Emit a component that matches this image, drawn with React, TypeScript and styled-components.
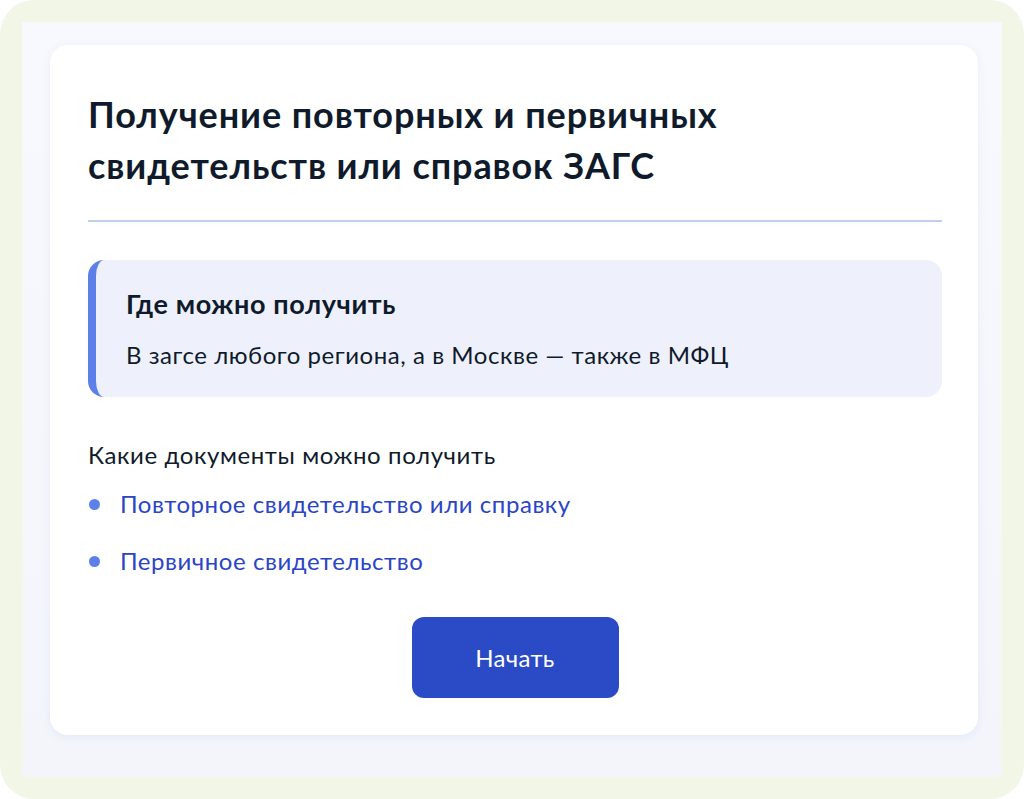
import React from "react";
import styled, { createGlobalStyle } from "styled-components";

const GlobalStyle = createGlobalStyle`
  html, body {
    margin: 0;
    padding: 0;
    background: #ffffff;
  }
  body {
    font-family: Lato, "Noto Sans", sans-serif;
    -webkit-font-smoothing: antialiased;
  }
`;

const docs = ["Повторное свидетельство или справку", "Первичное свидетельство"];

const App: React.FC = () => (
  <>
    <GlobalStyle />
    <Frame>
      <Canvas>
        <Card>
          <Title>
            Получение повторных и первичных
            <br />
            свидетельств или справок ЗАГС
          </Title>
          <Divider />
          <InfoBox>
            <InfoTitle>Где можно получить</InfoTitle>
            <InfoText>В загсе любого региона, а в Москве — также в МФЦ</InfoText>
          </InfoBox>
          <ListLabel>Какие документы можно получить</ListLabel>
          <DocList>
            {docs.map((d) => (
              <DocItem key={d}>
                <Dot />
                <DocLink>{d}</DocLink>
              </DocItem>
            ))}
          </DocList>
          <ButtonRow>
            <StartButton>Начать</StartButton>
          </ButtonRow>
        </Card>
      </Canvas>
    </Frame>
  </>
);

export default App;

// ------------------ Styled Components ------------------

const Frame = styled.div`
  width: 1024px;
  height: 799px;
  box-sizing: border-box;
  padding: 22px;
  background: #f2f6e7;
  border-radius: 34px;
`;

const Canvas = styled.div`
  height: 100%;
  box-sizing: border-box;
  padding: 23px 24px 0 28px;
  background: linear-gradient(180deg, #f8f9fe 0%, #f3f5fb 100%);
`;

const Card = styled.div`
  height: 690px;
  box-sizing: border-box;
  padding: 44px 36px 0 38px;
  background: #ffffff;
  border-radius: 18px;
  box-shadow: 0 2px 10px rgba(120, 130, 200, 0.1);
`;

const Title = styled.h1`
  margin: 0;
  font-size: 36px;
  line-height: 51px;
  font-weight: 700;
  color: #0f1a2b;
  letter-spacing: 0.9px;
`;

const Divider = styled.div`
  height: 2px;
  margin-top: 29px;
  background: #c3cff0;
`;

const InfoBox = styled.div`
  margin-top: 38px;
  height: 137px;
  box-sizing: border-box;
  padding: 28px 32px 0 30px;
  background: #eef1fb;
  border-radius: 16px;
  border-left: 8px solid #5c80e8;
`;

const InfoTitle = styled.div`
  font-size: 27px;
  line-height: 32px;
  font-weight: 700;
  color: #0f1a2b;
  letter-spacing: 0.6px;
`;

const InfoText = styled.div`
  margin-top: 21px;
  font-size: 24px;
  line-height: 28px;
  color: #0f1a2b;
  letter-spacing: 0.55px;
`;

const ListLabel = styled.div`
  margin-top: 44px;
  font-size: 24px;
  line-height: 28px;
  color: #0f1a2b;
  letter-spacing: 0.6px;
`;

const DocList = styled.ul`
  list-style: none;
  margin: 21px 0 0;
  padding: 0;
  display: flex;
  flex-direction: column;
  gap: 29px;
`;

const DocItem = styled.li`
  display: flex;
  align-items: center;
  gap: 20px;
  height: 28px;
`;

const Dot = styled.span`
  width: 11px;
  height: 11px;
  margin-left: 1px;
  border-radius: 50%;
  background: #5c80e8;
  flex-shrink: 0;
`;

const DocLink = styled.a`
  font-size: 24px;
  line-height: 28px;
  color: #2a45c6;
  letter-spacing: 0.55px;
  cursor: pointer;
`;

const ButtonRow = styled.div`
  display: flex;
  justify-content: center;
  margin-top: 42px;
`;

const StartButton = styled.button`
  width: 207px;
  height: 81px;
  border: none;
  border-radius: 12px;
  background: #2a4bc5;
  color: #ffffff;
  font-family: Lato, "Noto Sans", sans-serif;
  font-size: 24px;
  letter-spacing: 0.3px;
  cursor: pointer;
`;
